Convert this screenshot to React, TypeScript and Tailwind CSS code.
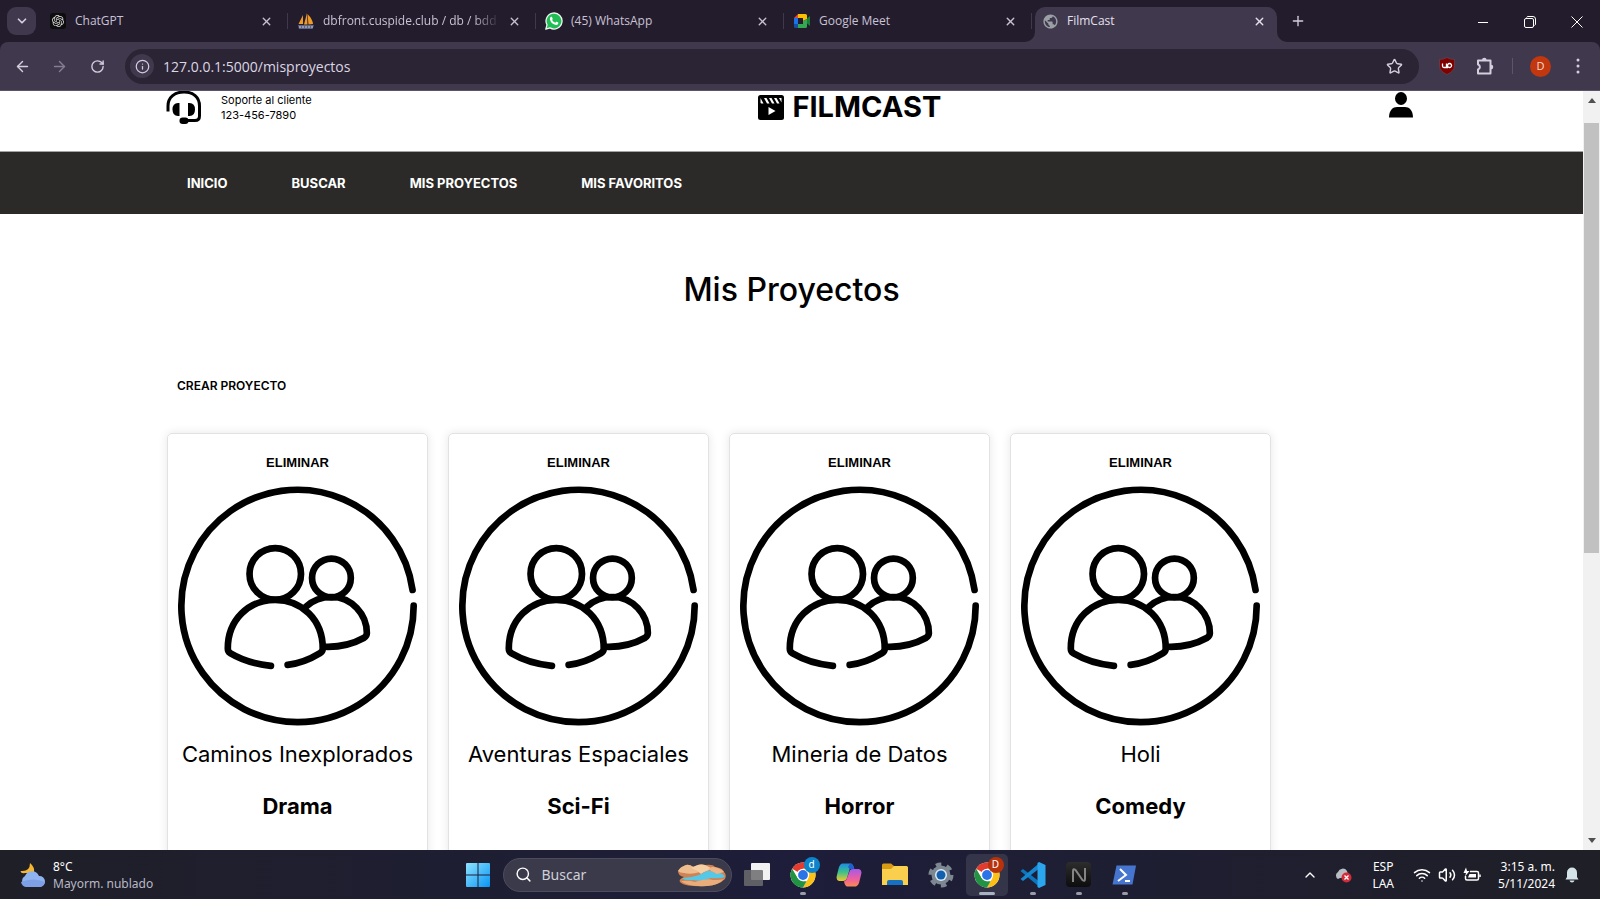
import type { ReactNode } from "react";
import { SiOpenai } from "react-icons/si";
import { MdPublic } from "react-icons/md";
import { ArrowLeft, ArrowRight, RotateCw, Star, X, Plus, ChevronDown, ChevronUp, Info, Search, Wifi, Volume2 } from "lucide-react";

function SailIcon() {
  return (
    <svg viewBox="0 0 18 18" className="size-[18px]">
      <path d="M6 3 L1.500 12 H6Z M10 1 L7 12.500 H10.500Z M10.500 2 Q15.500 7 16 12 L11.500 12.500Z" fill="#f09a2a" />
      <path d="M1 13 H17 L15.500 17 H2Z" fill="#5c6684" />
      <path d="M2 15 H16" stroke="#a9abc0" strokeWidth="1.500" strokeDasharray="2 1" />
    </svg>
  );
}

function MeetIcon() {
  return (
    <svg viewBox="0 0 18 16" className="h-4 w-[18px]">
      <path d="M1 5 L5 1 V5Z" fill="#ea4335" />
      <path d="M5 1 H12.500 Q14 1 14 2.500 V6 L10 8 V5 H5Z" fill="#fbbc04" />
      <path d="M1 5 H5 V11 H1Z" fill="#1a73e8" />
      <path d="M1 11 H5 V15 H2.500 Q1 15 1 13.500Z" fill="#174ea6" />
      <path d="M5 11 H10 V8 L14 6 V13.500 Q14 15 12.500 15 H5Z" fill="#34a853" />
      <path d="M14 5.500 L17 3 V13 L14 10.500Z" fill="#188038" />
    </svg>
  );
}

function WhatsIcon() {
  return (
    <svg viewBox="0 0 18 18" className="size-[18px]">
      <path d="M0.800 17.200 L2 12.800 A8 8 0 1 1 5 15.900Z" fill="#1fbd54" stroke="#f2f6f3" strokeWidth="1.300" strokeLinejoin="round" />
      <path d="M6 4.800 Q6.700 4.500 7 5 L7.700 6.700 Q7.800 7 7.100 7.900 Q8.200 10 10.300 10.800 L11.200 9.800 Q11.400 9.600 11.700 9.700 L13.200 10.500 Q13.500 10.700 13.300 11.400 Q12.600 13 11 12.900 Q6.300 12 4.900 7.400 Q4.700 5.600 6 4.800Z" fill="#fff" />
    </svg>
  );
}

interface TabInfo {
  title: string;
  icon: ReactNode;
  active?: boolean;
  fade?: boolean;
}

const tabs: TabInfo[] = [
  {
    title: "ChatGPT",
    icon: (
      <span className="flex size-4 items-center justify-center rounded-[3px] bg-[#0d0d0d] text-[#dedede]">
        <SiOpenai size={12} />
      </span>
    ),
  },
  { title: "dbfront.cuspide.club / db / bdd", icon: <SailIcon />, fade: true },
  { title: "(45) WhatsApp", icon: <WhatsIcon /> },
  { title: "Google Meet", icon: <MeetIcon /> },
  { title: "FilmCast", icon: <MdPublic size={17} className="text-[#9aa0a6]" />, active: true },
];

function Tab({ title, icon, active, fade }: TabInfo) {
  return (
    <div
      className={
        active
          ? "relative ml-[3px] flex h-[35px] w-[242px] shrink-0 items-center gap-2 rounded-t-[10px] bg-[#40384d] pr-[11px] pb-[7px] pl-[6px] text-[#e6e0ee]"
          : "relative flex h-[35px] w-[248px] shrink-0 items-center gap-2 pr-[15px] pb-[7px] pl-[9px] text-[#c9c2d4]"
      }
    >
      {active && (
        <>
          <svg viewBox="0 0 10 10" className="absolute bottom-0 -left-[10px] size-[10px]">
            <path d="M10 0 V10 H0 A10 10 0 0 0 10 0Z" fill="#40384d" />
          </svg>
          <svg viewBox="0 0 10 10" className="absolute -right-[10px] bottom-0 size-[10px]">
            <path d="M0 0 V10 H10 A10 10 0 0 1 0 0Z" fill="#40384d" />
          </svg>
        </>
      )}
      <span className="flex w-[18px] justify-center">{icon}</span>
      <span
        className={
          fade
            ? "min-w-0 flex-1 whitespace-nowrap [mask-image:linear-gradient(to_right,black_85%,transparent)]"
            : "min-w-0 flex-1 whitespace-nowrap"
        }
      >
        {title}
      </span>
      <button type="button" aria-label={"Cerrar " + title}>
        <X size={13} strokeWidth={2.5} />
      </button>
      {!active && <span className="absolute top-[6px] right-0 h-4 w-px bg-[#40384d]" />}
    </div>
  );
}

function BrowserBar() {
  return (
    <header className="shrink-0 bg-[#231c2d] font-['Open_Sans',sans-serif] text-[12px] text-[#d5cede]">
      <div className="flex h-[42px] items-end">
        <button type="button" aria-label="Buscar pestañas" className="mb-[7px] ml-[7px] flex h-7 w-[29px] items-center justify-center rounded-[9px] bg-[#40384d]">
          <ChevronDown size={14} strokeWidth={3} />
        </button>
        <div className="ml-1 flex min-w-0">
          {tabs.map((t) => (
            <Tab key={t.title} {...t} />
          ))}
        </div>
        <button type="button" aria-label="Nueva pestaña" className="mb-[13px] ml-[13px]">
          <Plus size={16} />
        </button>
        <div className="mb-[14px] ml-auto flex items-center gap-[35px] pr-[17px] text-white">
          <button type="button" aria-label="Minimizar">
            <svg viewBox="0 0 12 12" className="size-3"><path d="M1 6.500 H11" stroke="currentColor" /></svg>
          </button>
          <button type="button" aria-label="Restaurar">
            <svg viewBox="0 0 12 12" className="size-3" fill="none" stroke="currentColor">
              <rect x="0.500" y="2.500" width="9" height="9" rx="1.500" />
              <path d="M2.500 1.500 Q3 0.500 4 0.500 H9 Q11.500 0.500 11.500 3 V8 Q11.500 9 10.500 9.500" />
            </svg>
          </button>
          <button type="button" aria-label="Cerrar">
            <svg viewBox="0 0 12 12" className="size-3"><path d="M0.500 0.500 L11.500 11.500 M11.500 0.500 L0.500 11.500" stroke="currentColor" /></svg>
          </button>
        </div>
      </div>
      <div className="flex h-[49px] items-center rounded-t-[8px] border-b border-[#5b5367] bg-[#40384d] pr-5 pl-[14px]">
        <button type="button" aria-label="Atrás"><ArrowLeft size={17} /></button>
        <button type="button" aria-label="Adelante" className="ml-5 text-[#857d91]"><ArrowRight size={17} /></button>
        <button type="button" aria-label="Recargar" className="ml-[22px]"><RotateCw size={15} strokeWidth={2.2} /></button>
        <div className="ml-5 flex h-[35px] flex-1 items-center rounded-full bg-[#2b2434] pr-4 pl-[5px]">
          <span className="flex size-6 items-center justify-center rounded-full bg-[#40384d]"><Info size={15} /></span>
          <input aria-label="Dirección" defaultValue="127.0.0.1:5000/misproyectos" className="ml-[9px] flex-1 bg-transparent text-[14px] text-[#dcd6e4] outline-none" />
          <button type="button" aria-label="Favorito"><Star size={17} /></button>
        </div>
        <button type="button" aria-label="uBlock" className="ml-5">
          <svg viewBox="0 0 16 18" className="h-[18px] w-4">
            <path d="M8 0.500 Q11 2.500 15.500 2.500 V9 Q15 14.500 8 17.500 Q1 14.500 0.500 9 V2.500 Q5 2.500 8 0.500Z" fill="#800000" stroke="#6e5560" strokeWidth="0.500" />
            <path d="M3.500 6.500 V9 Q3.500 10.500 5 10.500 H7.500 V6.500 M7.500 10.500 H9 M10.500 6.500 A2 2 0 1 0 10.600 6.500Z" stroke="#fff" strokeWidth="1.300" fill="none" />
          </svg>
        </button>
        <button type="button" aria-label="Extensiones" className="ml-[21px]">
          <svg viewBox="0 0 18 18" className="size-[18px]">
            <path d="M2 3.500 H14.500 V16.500 H2 V12.500 A2.600 2.600 0 0 0 2 7.500Z" fill="none" stroke="currentColor" strokeWidth="2" strokeLinejoin="round" />
            <path d="M6 3 A2.300 2.300 0 0 1 10.600 3Z M15 7.800 A2.300 2.300 0 0 1 15 12.400Z" fill="currentColor" />
          </svg>
        </button>
        <span className="ml-[18px] h-4 w-px bg-[#5d556b]" />
        <button type="button" className="ml-[17px] flex size-[21px] items-center justify-center rounded-full bg-[#c2370d] text-[11px] text-[#f7dcd0]">D</button>
        <button type="button" aria-label="Menú" className="ml-[25px]">
          <svg viewBox="0 0 4 16" className="h-4 w-1" fill="currentColor"><circle cx="2" cy="2" r="1.500" /><circle cx="2" cy="8" r="1.500" /><circle cx="2" cy="14" r="1.500" /></svg>
        </button>
      </div>
    </header>
  );
}

function Headset() {
  return (
    <svg viewBox="0 0 36 34" className="h-[34px] w-9" fill="none" stroke="#000" strokeWidth="3">
      <path d="M2 20.500 V15 C2 6 9 1 18 1 C27 1 33.500 6 33.500 15 V25 Q33.500 29.500 29 29.500 H19" />
      <path d="M13.500 12 V25 H12 Q6.500 25 6.500 18.500 Q6.500 12 12 12Z" fill="#000" stroke="none" />
      <path d="M22 12 V25 H23.500 Q29 25 29 18.500 Q29 12 23.500 12Z" fill="#000" stroke="none" />
      <rect x="13.500" y="26.500" width="9" height="6.500" rx="3.200" fill="#000" stroke="none" />
    </svg>
  );
}

function Clapper() {
  return (
    <svg viewBox="0 0 26 25" className="h-[25px] w-[26px]">
      <rect width="26" height="25" rx="2.500" />
      <path d="M2.500 3 L5.500 8.500 H3.500 Q2.500 8.500 2.500 7.500Z M6 3 H8.500 L11.500 8.500 H9Z M11 3 H13.500 L16.500 8.500 H14Z M16 3 H18.500 L21.500 8.500 H19Z M21 3 H23.500 V7.500Z" fill="#fff" />
      <path d="M10.500 12 V20 L17.500 16Z" fill="#fff" />
    </svg>
  );
}

function GroupIcon() {
  return (
    <svg viewBox="0 0 715 715" className="block aspect-square w-full overflow-visible" fill="none" stroke="#000" strokeWidth="20" strokeLinecap="round" strokeLinejoin="round">
      <path d="M701.700 311 A347.500 347.500 0 1 0 705 358" />
      <circle cx="291" cy="263" r="77" />
      <circle cx="459" cy="275" r="58" />
      <path d="M278 538 Q208 531 156 500 Q149 495 149 486 C149 400 212 341 291 341 C370 341 433 400 433 486 Q433 495 425 500 Q376 530 328 535" />
      <path d="M383 361 C405 340 432 332 459 332 C520 332 565 384 565 440 Q565 449 557 454 Q505 483 440 481" />
    </svg>
  );
}

const projects = [
  { name: "Caminos Inexplorados", genre: "Drama" },
  { name: "Aventuras Espaciales", genre: "Sci-Fi" },
  { name: "Mineria de Datos", genre: "Horror" },
  { name: "Holi", genre: "Comedy" },
];

function Page() {
  return (
    <div className="flex min-h-0 flex-1 bg-white font-[Inter,sans-serif] text-black">
      <main className="min-w-0 flex-1 overflow-hidden">
        <div className="flex h-[60px] items-start justify-between pr-[169px] pl-[166px]">
          <div className="flex gap-[19px]">
            <Headset />
            <p className="pt-[2px] text-[11px] leading-[15px]">
              Soporte al cliente
              <br />
              123-456-7890
            </p>
          </div>
          <a href="#inicio" className="flex items-center gap-2 text-[29px] leading-8 font-bold">
            <Clapper />
            FILMCAST
          </a>
          <div className="pt-px">
            <svg viewBox="0 0 26 26" className="h-[26px] w-[26px]"><ellipse cx="13" cy="6.500" rx="6" ry="6.500" /><path d="M1 25.500 C1 18 5 15 9 15 H17 C21 15 25 18 25 25.500Z" /></svg>
          </div>
        </div>
        <nav className="flex h-[63px] items-center gap-16 border-t border-[#a3a3a3] bg-[#2b2a28] pt-px pl-[187px] text-[13px] font-bold text-white">
          <a href="#inicio">INICIO</a>
          <a href="#buscar">BUSCAR</a>
          <a href="#proyectos">MIS PROYECTOS</a>
          <a href="#favoritos">MIS FAVORITOS</a>
        </nav>
        <h1 className="pt-[52px] text-center text-[32px] leading-[48px] font-medium">Mis Proyectos</h1>
        <a href="#crear" className="mt-[62px] ml-[177px] block w-fit text-[12px] leading-5 font-semibold">CREAR PROYECTO</a>
        <div className="mt-[37px] flex gap-5 pl-[167px]">
          {projects.map((p) => (
            <article key={p.name} className="h-[500px] w-[261px] shrink-0 rounded-[5px] border border-[#e2e2e2] px-[10px] pt-5 text-center shadow-[0_0_10px_rgba(0,0,0,0.1)]">
              <button type="button" className="mx-auto block font-['Liberation_Sans',sans-serif] text-[13px] leading-[18px] font-bold">ELIMINAR</button>
              <div className="mt-[14px]">
                <GroupIcon />
              </div>
              <h2 className="mt-[11px] text-[22px] leading-9 whitespace-nowrap">{p.name}</h2>
              <p className="mt-4 text-[22px] leading-9 font-bold">{p.genre}</p>
            </article>
          ))}
        </div>
      </main>
      <div className="flex w-[17px] shrink-0 flex-col items-center justify-between bg-[#f1f1f1] py-[7px]">
        <svg viewBox="0 0 8 5" className="h-[5px] w-2"><path d="M0 5 L4 0 L8 5Z" fill="#505050" /></svg>
        <div className="mt-5 mb-auto h-[430px] w-[15px] bg-[#c1c1c1]" />
        <svg viewBox="0 0 8 5" className="h-[5px] w-2"><path d="M0 0 L4 5 L8 0Z" fill="#505050" /></svg>
      </div>
    </div>
  );
}

function ChromeIcon({ badge, color }: { badge: string; color: string }) {
  return (
    <span className="relative">
      <svg viewBox="0 0 26 26" className="size-[26px]">
        <circle cx="13" cy="13" r="12.500" fill="#fff" />
        <path d="M13 13 L2.170 6.750 A12.500 12.500 0 0 1 23.830 6.750 H13Z" fill="#e33b2e" />
        <path d="M13 6.750 H23.830 A12.500 12.500 0 0 1 13 25.500 L18.400 16.100Z" fill="#fbc116" />
        <path d="M2.170 6.750 L7.600 16.100 L13 19.250 H16.600 L13 25.500 A12.500 12.500 0 0 1 2.170 6.750Z" fill="#229342" />
        <circle cx="13" cy="13" r="6.200" fill="#fff" />
        <circle cx="13" cy="13" r="4.900" fill="#2a74e8" />
      </svg>
      <span className="absolute -top-[5px] left-[14px] flex size-4 items-center justify-center rounded-full text-[10px] text-white" style={{ backgroundColor: color }}>
        {badge}
      </span>
    </span>
  );
}

function BarItem({ label, children, state }: { label: string; children: ReactNode; state?: "open" | "active" }) {
  return (
    <button
      type="button"
      aria-label={label}
      className={
        state === "active"
          ? "relative flex h-[42px] w-[42px] items-center justify-center rounded-[5px] bg-white/10"
          : "relative flex h-[42px] w-[42px] items-center justify-center"
      }
    >
      {children}
      {state === "open" && <span className="absolute bottom-px left-[18px] h-[3px] w-[6px] rounded-full bg-[#9b9ca8]" />}
      {state === "active" && <span className="absolute bottom-px left-[13px] h-[3px] w-4 rounded-full bg-[#a9b3c2]" />}
    </button>
  );
}

function Taskbar() {
  return (
    <footer className="grid h-[49px] shrink-0 grid-cols-[1fr_auto_1fr] items-center bg-linear-to-r from-[#1f1f28] via-[#1e1d3a] to-[#1f1f27] font-['Noto_Sans',sans-serif] text-[12px] leading-[17px] text-white">
      <div className="flex items-center gap-[7px] pl-5">
        <svg viewBox="0 0 26 26" className="size-[26px]">
          <path d="M10 1 Q15 5 14 11 H5 Q1 12 0.500 9 Q10 10 10 1Z" fill="#f5b62f" />
          <path d="M7 25 A6 6 0 0 1 5 14 A7.500 7.500 0 0 1 19 14 A5.500 5.500 0 0 1 20 25Z" fill="#8fb2f0" />
          <path d="M1 20 Q13 15 25 20 Q24 25 19 25 H7 Q2 25 1 20Z" fill="#7d9fe6" />
        </svg>
        <p>8°C<br /><span className="text-[#b9b9c4]">Mayorm. nublado</span></p>
      </div>
      <div className="flex items-center gap-1 pl-[2px]">
        <BarItem label="Inicio">
          <svg viewBox="0 0 24 24" className="size-6">
            <defs><linearGradient id="win" x1="0" y1="0" x2="1" y2="1"><stop offset="0" stopColor="#8fe3ff" /><stop offset="1" stopColor="#0795f5" /></linearGradient></defs>
            <path d="M0 1 Q0 0 1 0 H11.500 V11.500 H0Z M12.500 0 H23 Q24 0 24 1 V11.500 H12.500Z M0 12.500 H11.500 V24 H1 Q0 24 0 23Z M12.500 12.500 H24 V23 Q24 24 23 24 H12.500Z" fill="url(#win)" />
          </svg>
        </BarItem>
        <label className="flex h-[34px] w-[229px] items-center rounded-full border border-[#4c4c5e] bg-[#3a3a4b] pr-1 pl-[11px]">
          <Search size={17} />
          <input aria-label="Buscar" placeholder="Buscar" className="ml-[10px] w-0 flex-1 bg-transparent text-[14px] outline-none placeholder:text-[#cfcfd8]" />
          <svg viewBox="0 0 50 24" className="h-6 w-[50px]">
            <path d="M1 8 Q3 4 9 2 Q12 1 17 4 Q22 0 28 2 Q36 1 38 4 Q46 5 47 9 Q50 12 48 16 Q42 22 30 23 Q10 24 4 20 Q0 17 7 14 Q1 13 1 8Z" fill="#cf8253" />
            <path d="M1 8 Q3 4 9 2 Q12 1 16 4 L23 9 Q14 12 7 10 Q3 10 1 8Z" fill="#eebd8f" />
            <path d="M14 5 Q22 0 28 2 L36 6 Q28 8 24 11 Q20 7 14 5Z" fill="#f5cfa4" />
            <path d="M5 15 Q14 15 22 12 L30 8 Q34 7 38 10 Q45 9 48 14 Q42 16 34 15 Q24 19 16 17 Q8 18 5 15Z" fill="#55c8e8" />
            <path d="M35 4 Q42 4 47 9 L40 11 Q34 8 31 6Z" fill="#efb586" />
            <path d="M4 18 Q12 17 18 19 Q30 15 36 17 Q44 17 47 16 Q42 22 30 23 Q10 24 4 18Z" fill="#e9ad7c" />
          </svg>
        </label>
        <BarItem label="Vista de tareas">
          <svg viewBox="0 0 26 24" className="h-6 w-[26px]"><rect x="7" y="0" width="19" height="17" rx="1" fill="#f1f1f1" /><rect x="0" y="7" width="19" height="16" rx="1" fill="#6b6b6e" fillOpacity="0.850" /></svg>
        </BarItem>
        <BarItem label="Chrome d" state="open"><ChromeIcon badge="d" color="#0b84cc" /></BarItem>
        <BarItem label="Copilot">
          <svg viewBox="0 0 26 24" className="h-6 w-[26px]">
            <defs>
              <linearGradient id="cpA" x1="0" y1="0" x2="0" y2="1"><stop offset="0" stopColor="#1d8be6" /><stop offset=".5" stopColor="#3cc28b" /><stop offset="1" stopColor="#f3c62b" /></linearGradient>
              <linearGradient id="cpB" x1="0" y1="0" x2="0" y2="1"><stop offset="0" stopColor="#a659ea" /><stop offset=".6" stopColor="#f0609c" /><stop offset="1" stopColor="#fa8b4e" /></linearGradient>
            </defs>
            <path d="M6 0.500 H15 Q17 1 18 5 H14 L11 15 Q10 18 7 18 H3 Q-0.500 17 1 12 L3 4 Q4 1 6 0.500Z" fill="url(#cpA)" />
            <path d="M14 0.500 Q17 0.500 18 5 L18.500 6 H13.500 L12 4Z" fill="#1f5fcf" />
            <path d="M20 23.500 H11 Q9 23 8 18.500 Q10.500 18 11 15 L14 7 Q15 6 18 6 H23 Q26.500 7 25 12 L23 20 Q22 23 20 23.500Z" fill="url(#cpB)" />
          </svg>
        </BarItem>
        <BarItem label="Explorador">
          <svg viewBox="0 0 26 23" className="h-[23px] w-[26px]"><path d="M0 2 Q0 0.500 1.500 0.500 H9 L12 3 V7 H0Z" fill="#d99a14" /><path d="M0 6 H9 L12 3 H24.500 Q26 3 26 4.500 V22 H0Z" fill="#fbcf4e" /><path d="M5 22 V19 Q5 17 7 17 H19 Q21 17 21 19 V22Z" fill="#1671c0" /></svg>
        </BarItem>
        <BarItem label="Configuración">
          <svg viewBox="0 0 26 26" className="size-[26px]"><circle cx="13" cy="13" r="9.500" fill="#7d8792" /><circle cx="13" cy="13" r="10.500" fill="none" stroke="#7d8792" strokeWidth="4" strokeDasharray="5.500 5.500" /><circle cx="13" cy="13" r="6" fill="#dfe9f2" /><circle cx="13" cy="13" r="4.500" fill="#1260b0" /></svg>
        </BarItem>
        <BarItem label="Chrome D" state="active"><ChromeIcon badge="D" color="#b8320c" /></BarItem>
        <BarItem label="Visual Studio Code" state="open">
          <svg viewBox="0 0 26 26" className="size-[26px]"><path d="M0.500 9 L3 7 L20 20 V25.500 Z" fill="#0b76bd" /><path d="M0.500 17 L3 19 L20 6 V0.500Z" fill="#1487d0" /><path d="M19 0 L25.500 3 V23 L19 26 L17.500 25 V1Z" fill="#2ba5ee" /></svg>
        </BarItem>
        <BarItem label="Notion" state="open">
          <span className="flex size-[25px] items-center justify-center rounded-[4px] bg-linear-to-b from-[#2d2d2d] to-[#0d0d0d]">
            <svg viewBox="0 0 16 16" className="size-4" fill="none" stroke="#858585" strokeWidth="2"><path d="M2 15 V4 Q2 1 4.500 3 L11.500 13 Q14 15 14 12 V1" /></svg>
          </span>
        </BarItem>
        <BarItem label="PowerShell" state="open">
          <svg viewBox="0 0 25 20" className="h-5 w-[25px]"><path d="M4.500 0.500 H24 L20.500 19.500 H0.500Z" fill="#4675cf" /><path d="M8 4 L14 10 L6 16 M13 16 H18" stroke="#fff" strokeWidth="2" fill="none" /></svg>
        </BarItem>
      </div>
      <div className="flex items-center justify-end pr-[21px]">
        <ChevronUp size={16} />
        <svg viewBox="0 0 18 16" className="ml-4 h-4 w-[18px]"><path d="M4 12 A4 4 0 0 1 4 5 A5 5 0 0 1 13 4 L15 11 H6Z" fill="#b9bcc2" /><circle cx="12.500" cy="10.500" r="5" fill="#d22c3a" /><path d="M10.500 8.500 L14.500 12.500 M14.500 8.500 L10.500 12.500" stroke="#fff" strokeWidth="1.300" /></svg>
        <p className="ml-5 text-center">ESP<br />LAA</p>
        <Wifi size={18} className="ml-[19px]" />
        <Volume2 size={18} className="ml-[7px]" />
        <svg viewBox="0 0 18 16" className="ml-[7px] h-4 w-[18px]" fill="none" stroke="#fff" strokeWidth="1.500"><path d="M7 4.500 H14 Q15.500 4.500 15.500 6 V11.500 Q15.500 13 14 13 H4 Q2.500 13 2.500 11.500 V9" /><path d="M17 7.500 V10" /><path d="M6.500 7 H13 V10.500 H5Z" fill="#fff" stroke="none" /><path d="M3 0.500 L0.500 6 H3 L2 9.500 L6.500 4 H4Z" fill="#fff" stroke="none" /></svg>
        <p className="ml-[17px] text-right">3:15 a. m.<br />5/11/2024</p>
        <svg viewBox="0 0 14 16" className="ml-[10px] h-4 w-[14px]" fill="#d3e3e8"><path d="M7 0.500 A5 5 0 0 1 12 5.500 V10 L13.500 12.500 H0.500 L2 10 V5.500 A5 5 0 0 1 7 0.500Z" /><path d="M4.500 13.500 H9.500 Q9 15.500 7 15.500 Q5 15.500 4.500 13.500Z" /></svg>
      </div>
    </footer>
  );
}

export default function App() {
  return (
    <div className="flex h-screen flex-col overflow-hidden">
      <BrowserBar />
      <Page />
      <Taskbar />
    </div>
  );
}
